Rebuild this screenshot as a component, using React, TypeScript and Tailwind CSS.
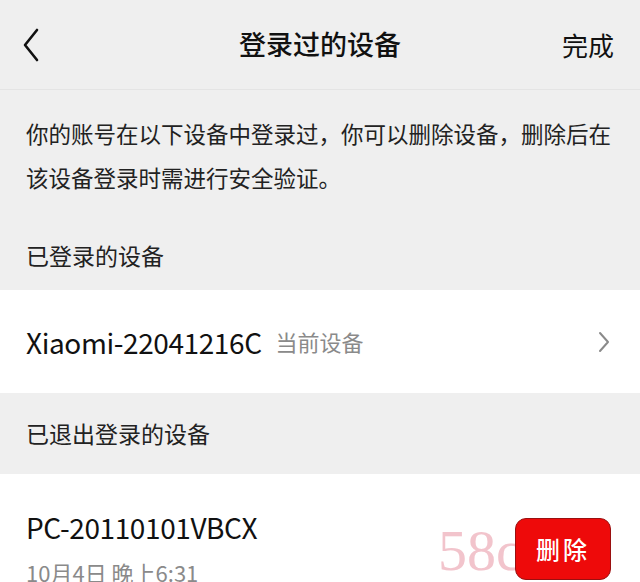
const font = { fontFamily: '"Noto Sans CJK SC", "Noto Sans", sans-serif' };

function ChevronLeft() {
  return (
    <svg width="18" height="34" viewBox="0 0 18 34" fill="none">
      <path d="M15 2 L3 17 L15 32" stroke="#111" strokeWidth="2.6" strokeLinecap="round" strokeLinejoin="round" />
    </svg>
  );
}

function ChevronRight() {
  return (
    <svg width="12" height="22" viewBox="0 0 12 22" fill="none">
      <path d="M2 2 L10 11 L2 20" stroke="#8a8a8a" strokeWidth="2" strokeLinecap="round" strokeLinejoin="round" />
    </svg>
  );
}

export default function App() {
  return (
    <div className="w-[640px] h-[582px] overflow-hidden bg-[#efefef] text-[#111]" style={font}>
      <header className="h-[90px] flex items-center justify-between pl-[22px] pr-[26px] border-b border-[#e4e4e4] relative">
        <ChevronLeft />
        <h1 className="absolute left-0 right-0 text-center text-[27px] font-medium pointer-events-none">
          登录过的设备
        </h1>
        <span className="text-[26px]">完成</span>
      </header>

      <p className="pl-[26px] pr-[22px] pt-[21px] text-[22.5px] leading-[44px] text-[#222]">
        你的账号在以下设备中登录过，你可以删除设备，删除后在该设备登录时需进行安全验证。
      </p>

      <div className="px-[26px] h-[91px] pt-[34px] text-[23px] leading-[44px] text-[#222]">已登录的设备</div>

      <div className="bg-white h-[103px] flex items-center pl-[26px] pr-[30px]">
        <span className="text-[28px] tracking-[-0.4px]">Xiaomi-22041216C</span>
        <span className="ml-[14px] text-[22px] text-[#8a8a8a]">当前设备</span>
        <span className="ml-auto">
          <ChevronRight />
        </span>
      </div>

      <div className="h-[81px] flex items-center px-[26px] text-[23px] text-[#222]">已退出登录的设备</div>

      <div className="bg-white relative h-[120px] pl-[26px] pr-[30px] pt-[33px]">
        <div className="text-[28px] leading-[40px] tracking-[-0.4px]">PC-20110101VBCX</div>
        <div className="text-[22px] leading-[30px] mt-[10px] text-[#8a8a8a]">10月4日 晚上6:31</div>
        <div
          className="absolute left-[438px] top-[42px] text-[58px] leading-[70px] text-[#f2c4cc]"
          style={{ fontFamily: '"Liberation Serif", serif' }}
        >
          58cobs
        </div>
        <button className="absolute left-[515px] top-[44px] w-[96px] h-[62px] rounded-[11px] bg-[#ee0a0a] border border-[#9a1010] text-white text-[24px] font-medium tracking-[3px]">
          删除
        </button>
      </div>
    </div>
  );
}
